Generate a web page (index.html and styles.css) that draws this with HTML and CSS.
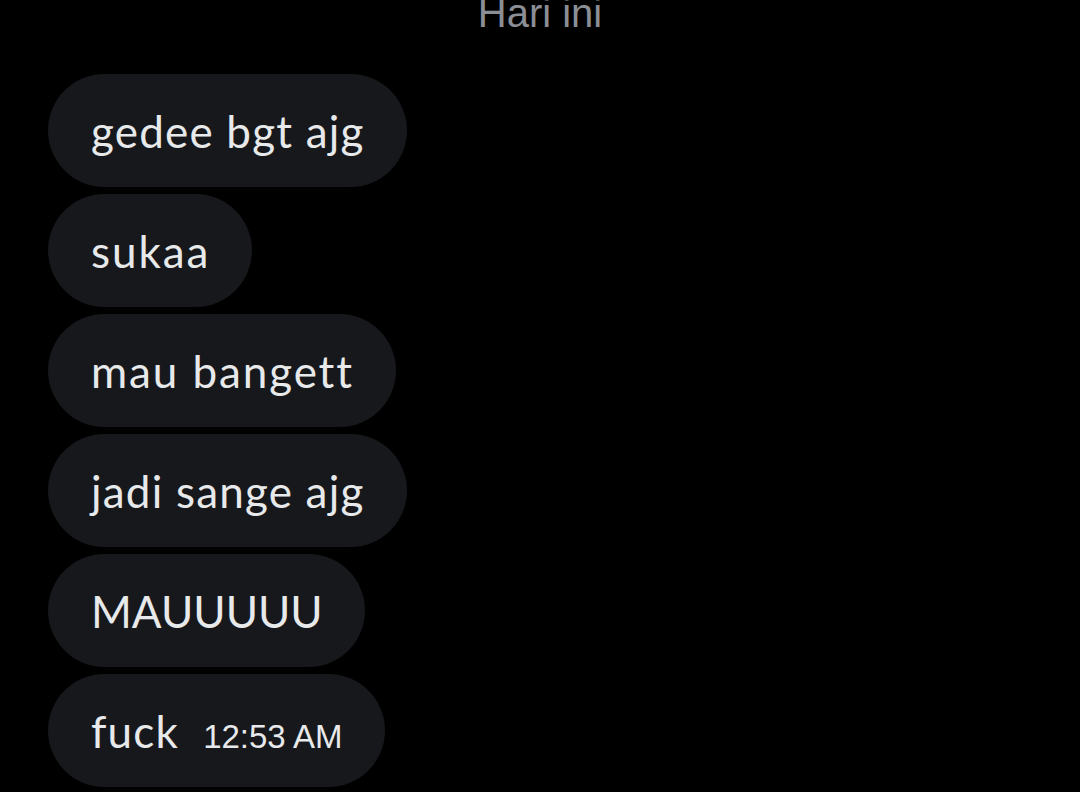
FILE: index.html
```html
<!DOCTYPE html>
<html>
<head>
<meta charset="utf-8">
<link rel="stylesheet" href="styles.css">
</head>
<body>
<div class="chat">
  <div class="day">Hari ini</div>
  <div class="list">
    <div class="bubble">gedee bgt ajg</div>
    <div class="bubble wide">sukaa</div>
    <div class="bubble wide">mau bangett</div>
    <div class="bubble">jadi sange ajg</div>
    <div class="bubble caps">MAUUUUU</div>
    <div class="bubble"><span>fuck</span><span class="time">12:53 AM</span></div>
  </div>
</div>
</body>
</html>
```
FILE: styles.css
```css
html, body {
  margin: 0;
  padding: 0;
  background: #000;
  width: 1080px;
  height: 792px;
  overflow: hidden;
}
.chat {
  display: flex;
  flex-direction: column;
}
.day {
  font-family: "Liberation Sans", Arial, sans-serif;
  font-size: 40px;
  color: #8b8f95;
  text-align: center;
  line-height: 40px;
  margin-top: -7px;
  height: 40px;
}
.list {
  display: flex;
  flex-direction: column;
  align-items: flex-start;
  gap: 7px;
  padding: 41px 0 0 48px;
}
.bubble {
  background: #16181c;
  color: #e7e9ea;
  font-family: Lato, "Open Sans", sans-serif;
  font-size: 44px;
  letter-spacing: 1.2px;
  height: 113px;
  border-radius: 57px;
  padding: 0 42px 0 43px;
  display: flex;
  align-items: center;
  box-sizing: border-box;
}
.bubble.wide {
  letter-spacing: 1.9px;
}
.bubble.caps {
  letter-spacing: 0;
}
.time {
  font-family: "Liberation Sans", Arial, sans-serif;
  font-size: 33px;
  letter-spacing: 0;
  margin-left: 24px;
  margin-top: 12px;
}
```
